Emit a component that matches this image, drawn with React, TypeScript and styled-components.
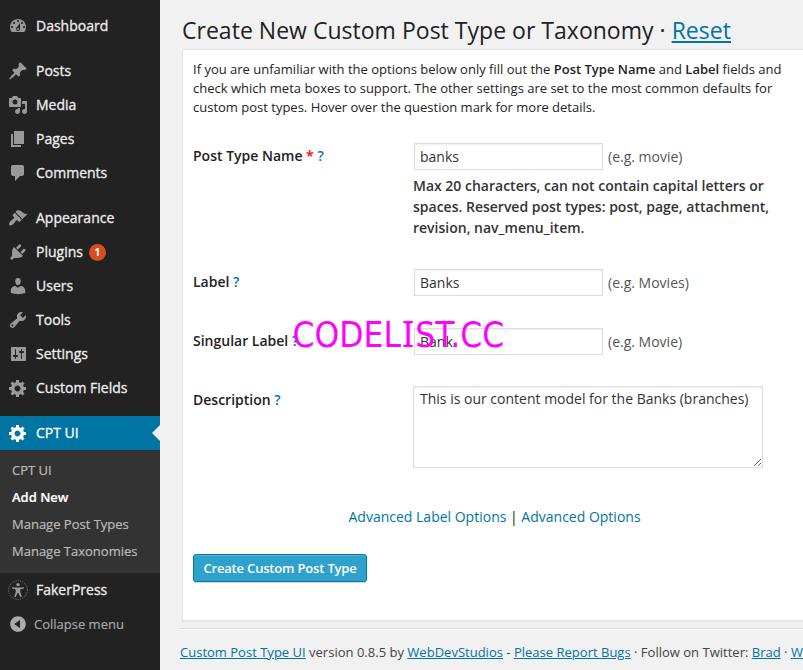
import React from 'react';
import styled, { createGlobalStyle, css } from 'styled-components';

const GlobalStyle = createGlobalStyle`
  * { box-sizing: border-box; }
  html, body { margin: 0; padding: 0; overflow: hidden; }
  body {
    background: #f1f1f1;
    color: #222;
    font-family: 'Open Sans', 'Noto Sans', sans-serif;
    font-size: 14px;
  }
`;

const Page = styled.div`
  position: relative;
  display: flex;
  width: 803px;
  height: 670px;
  overflow: hidden;
`;

const Sidebar = styled.nav`
  flex: none;
  width: 160px;
  height: 670px;
  padding-top: 9px;
  background: #222;
`;

const MenuGroup = styled.div`
  margin-bottom: 11px;
`;

const MenuItem = styled.a<{ $active?: boolean }>`
  display: flex;
  align-items: center;
  height: 34px;
  padding-left: 8px;
  color: ${p => (p.$active ? '#fff' : '#eee')};
  background: ${p => (p.$active ? '#0074a2' : 'transparent')};
  svg { flex: none; width: 20px; height: 20px; margin-right: 8px; fill: ${p => (p.$active ? '#fff' : '#999')}; }
`;

const MenuText = styled.span`
  font-size: 14px;
  font-weight: 500;
  line-height: 18px;
  white-space: nowrap;
  -webkit-text-stroke: 0.3px currentColor;
`;

const Count = styled.span`
  display: flex;
  align-items: center;
  justify-content: center;
  width: 17px;
  height: 17px;
  margin-left: 6px;
  border-radius: 50%;
  background: #d54e21;
  color: #fff;
  font-size: 10px;
  font-weight: 700;
`;

const Pointer = styled.span`
  width: 0;
  height: 0;
  margin-left: auto;
  border: 8px solid transparent;
  border-left: 0;
  border-right-color: #f1f1f1;
`;

const Submenu = styled.div`
  height: 123px;
  padding: 7px 0 0 12px;
  background: #333;
`;

const SubmenuItem = styled.a<{ $current?: boolean }>`
  display: block;
  height: 27px;
  font-size: 13px;
  line-height: 27px;
  white-space: nowrap;
  color: ${p => (p.$current ? '#fff' : '#bbb')};
  font-weight: ${p => (p.$current ? 600 : 400)};
  -webkit-text-stroke: 0.2px currentColor;
`;

const Collapse = styled.a`
  display: flex;
  align-items: center;
  height: 34px;
  padding-left: 8px;
  color: #aaa;
  font-size: 13px;
  -webkit-text-stroke: 0.15px currentColor;
  svg { width: 20px; height: 20px; margin-right: 6px; fill: #aaa; }
`;

const Content = styled.main`
  flex: none;
  width: 643px;
  padding: 15px 0 0 20px;
`;

const Title = styled.h2`
  height: 34px;
  margin: 0 0 0 2px;
  font-size: 23px;
  font-weight: 400;
  line-height: 31px;
  letter-spacing: 0.02px;
  white-space: nowrap;
`;

const link = css`
  color: #0074a2;
`;

const Link = styled.a`
  ${link}
  text-decoration: underline;
`;

const PlainLink = styled.a`
  ${link}
`;

const Panel = styled.section`
  width: 660px;
  height: 572px;
  margin-left: 2px;
  padding: 10px 0 0 10px;
  background: #fff;
  border: 1px solid #e5e5e5;
  box-shadow: 0 1px 1px rgba(0, 0, 0, 0.04);
`;

const Intro = styled.p`
  margin: 0 0 26px;
  font-size: 13px;
  line-height: 19px;
  white-space: nowrap;
  strong { font-weight: 600; }
`;

const Row = styled.div<{ $height: number }>`
  display: grid;
  grid-template-columns: 220px 1fr;
  height: ${p => p.$height}px;
`;

const Label = styled.label<{ $tall?: boolean }>`
  font-size: 14px;
  font-weight: 600;
  line-height: ${p => (p.$tall ? 27 : 25)}px;
  white-space: nowrap;
`;

const Required = styled.span`
  color: #f00;
`;

const Help = styled.a`
  ${link}
  font-weight: 600;
`;

const Field = styled.div`
  display: flex;
  align-items: center;
  height: 27px;
  padding-left: 1px;
  color: #555;
`;

const fieldBox = css`
  border: 1px solid #ddd;
  border-radius: 0;
  outline: none;
  background: #fff;
  box-shadow: inset 0 1px 2px rgba(0, 0, 0, 0.07);
  color: #333;
  font-family: inherit;
  font-size: 14px;
`;

const TextInput = styled.input`
  ${fieldBox}
  width: 189px;
  height: 27px;
  margin-right: 5px;
  padding: 0 5px 1px;
`;

const TextArea = styled.textarea`
  ${fieldBox}
  display: block;
  width: 350px;
  height: 82px;
  padding: 2px 6px;
  line-height: 20px;
  resize: both;
`;

const Note = styled.p`
  margin: 5px 0 0;
  font-size: 14px;
  font-weight: 600;
  line-height: 21px;
  color: #333;
  white-space: nowrap;
`;

const Options = styled.p`
  height: 20px;
  margin: 0 0 27px 155.5px;
  line-height: 20px;
  white-space: nowrap;
`;

const Submit = styled.button`
  display: block;
  width: 174px;
  height: 28px;
  padding: 0;
  background: #2ea2cc;
  border: 1px solid #0074a2;
  border-radius: 3px;
  box-shadow: inset 0 1px 0 rgba(120, 200, 230, 0.5), 0 1px 0 rgba(0, 0, 0, 0.15);
  color: #fff;
  font-family: inherit;
  font-size: 13px;
  font-weight: 600;
  letter-spacing: -0.18px;
  white-space: nowrap;
`;

const Footer = styled.footer`
  height: 42px;
  margin-top: 7px;
  padding-top: 13px;
  border-top: 1px solid #ddd;
  box-shadow: inset 0 1px 0 #fcfcfc;
  color: #444;
  font-size: 13px;
  line-height: 20px;
  letter-spacing: 0.01px;
  white-space: nowrap;
`;

const Watermark = styled.div`
  position: absolute;
  left: 292.6px;
  top: 310px;
  color: #f0f;
  font-family: 'DejaVu Sans Condensed', 'DejaVu Sans', sans-serif;
  font-size: 35px;
  line-height: 50px;
  white-space: nowrap;
`;

const SerifedLetter = styled.span`
  margin: 0 1px;
  font-family: 'Noto Sans', sans-serif;
  font-size: 36px;
  line-height: 0;
`;

const icons = {
  dashboard: 'M3.76 16h12.48c1.1-1.37 1.76-3.11 1.76-5 0-4.42-3.58-8-8-8s-8 3.58-8 8c0 1.89.66 3.63 1.76 5zM10 4c.55 0 1 .45 1 1s-.45 1-1 1-1-.45-1-1 .45-1 1-1zM6 6c.55 0 1 .45 1 1s-.45 1-1 1-1-.45-1-1 .45-1 1-1zm8 0c.55 0 1 .45 1 1s-.45 1-1 1-1-.45-1-1 .45-1 1-1zm-5.37 5.55L12 7v6c0 1.1-.9 2-2 2s-2-.9-2-2c0-.57.24-1.08.63-1.45zM4 10c.55 0 1 .45 1 1s-.45 1-1 1-1-.45-1-1 .45-1 1-1zm12 0c.55 0 1 .45 1 1s-.45 1-1 1-1-.45-1-1 .45-1 1-1zm-5 3c0-.55-.45-1-1-1s-1 .45-1 1 .45 1 1 1 1-.45 1-1z',
  post: 'M10.44 3.02l1.82-1.82 6.36 6.35-1.83 1.82c-1.05-.68-2.48-.57-3.41.36l-.75.75c-.92.93-1.04 2.35-.35 3.41l-1.83 1.82-2.41-2.41-2.8 2.79c-.42.42-3.38 2.71-3.8 2.29s1.86-3.39 2.28-3.81l2.79-2.79L4.1 9.36l1.83-1.82c1.05.69 2.48.57 3.4-.36l.75-.75c.93-.92 1.05-2.35.36-3.41z',
  media: 'M13 11V4c0-.55-.45-1-1-1h-1.67L9 1H5L3.67 3H2c-.55 0-1 .45-1 1v7c0 .55.45 1 1 1h10c.55 0 1-.45 1-1zM7 4.5c1.38 0 2.5 1.12 2.5 2.5S8.38 9.5 7 9.5 4.5 8.38 4.5 7 5.62 4.5 7 4.5zM14 6h5v10.5c0 1.38-1.12 2.5-2.5 2.5S14 17.88 14 16.5s1.12-2.5 2.5-2.5c.17 0 .34.02.5.05V9h-3V6zm-4 8.05V13h2v3.5c0 1.38-1.12 2.5-2.5 2.5S7 17.88 7 16.5 8.12 14 9.5 14c.17 0 .34.02.5.05z',
  page: 'M6 15V2h10v13H6zm-1 1h8v2H3V5h2v11z',
  comments: 'M5 2h9c1.1 0 2 .9 2 2v7c0 1.1-.9 2-2 2h-2l-5 5v-5H5c-1.1 0-2-.9-2-2V4c0-1.1.9-2 2-2z',
  appearance: 'M14.48 11.06L7.41 3.99l1.5-1.5c.5-.56 2.3-.47 3.51.32 1.21.8 1.43 1.28 2.91 2.1 1.18.64 2.45 1.26 4.45.85zm-.71.71L6.7 4.7 4.93 6.47c-.39.39-.39 1.02 0 1.41l1.06 1.06c.39.39.39 1.03 0 1.42-.6.6-1.43 1.11-2.21 1.69-.35.26-.7.53-1.01.84C1.43 14.23.4 16.08 1.4 17.07c.99 1 2.84-.03 4.18-1.36.31-.31.58-.66.85-1.02.57-.78 1.08-1.61 1.69-2.21.39-.39 1.02-.39 1.41 0l1.06 1.06c.39.39 1.02.39 1.41 0z',
  plugins: 'M13.11 4.36L9.87 7.6 8 5.73l3.24-3.24c.35-.34 1.05-.2 1.56.32.52.51.66 1.21.31 1.55zm-8 1.77l.91-1.12 9.01 9.01-1.19.84c-.71.71-2.63 1.16-3.82 1.16H6.14L4.9 17.26c-.59.59-1.54.59-2.12 0-.59-.58-.59-1.53 0-2.12l1.24-1.24v-3.88c0-1.13.4-3.19 1.09-3.89zm7.26 3.97l3.24-3.24c.34-.35 1.04-.21 1.55.31.52.51.66 1.21.31 1.55l-3.24 3.25z',
  users: 'M10 9.25c-2.27 0-2.73-3.44-2.73-3.44C7 4.02 7.82 2 9.97 2c2.16 0 2.98 2.02 2.71 3.81 0 0-.41 3.44-2.68 3.44zm0 2.57L12.72 10c2.39 0 4.52 2.33 4.52 4.53v2.49s-3.65 1.13-7.24 1.13c-3.65 0-7.24-1.13-7.24-1.13v-2.49c0-2.25 1.94-4.48 4.47-4.48z',
  tools: 'M16.68 9.77c-1.34 1.34-3.3 1.67-4.95.99l-5.41 6.52c-.99.99-2.59.99-3.58 0s-.99-2.59 0-3.57l6.52-5.42c-.68-1.65-.35-3.61.99-4.95 1.28-1.28 3.12-1.62 4.72-1.06l-2.89 2.89 2.82 2.82 2.86-2.87c.53 1.58.18 3.39-1.08 4.65zM3.81 16.21c.4.39 1.04.39 1.43 0 .4-.4.4-1.04 0-1.43-.39-.4-1.03-.4-1.43 0-.39.39-.39 1.03 0 1.43z',
  settings: 'M18 16V4c0-.55-.45-1-1-1H4c-.55 0-1 .45-1 1v12c0 .55.45 1 1 1h13c.55 0 1-.45 1-1zM8 11h1.5c.3 0 .5.45.5 1s-.2 1-.5 1H8v1.5c0 .28-.22.5-.5.5s-.5-.22-.5-.5V13H5.5c-.3 0-.5-.45-.5-1s.2-1 .5-1H7V5.5c0-.28.22-.5.5-.5s.5.22.5.5V11zm5-2h-1c-.55 0-1-.45-1-1s.45-1 1-1h1V5.5c0-.28.22-.5.5-.5s.5.22.5.5V7h1c.55 0 1 .45 1 1s-.45 1-1 1h-1v5.5c0 .28-.22.5-.5.5s-.5-.22-.5-.5V9z',
  gear: 'M18 12h-2.18c-.17.7-.44 1.35-.81 1.93l1.54 1.54-2.1 2.1-1.54-1.54c-.58.36-1.23.63-1.91.79V19H8v-2.18c-.68-.16-1.33-.43-1.91-.79l-1.54 1.54-2.12-2.12 1.54-1.54c-.36-.58-.63-1.23-.79-1.91H1V9.03h2.17c.16-.7.44-1.35.8-1.94L2.43 5.55l2.1-2.1 1.54 1.54c.58-.37 1.24-.64 1.93-.81V2h3v2.18c.68.16 1.33.43 1.91.79l1.54-1.54 2.12 2.12-1.54 1.54c.36.59.64 1.24.8 1.94H18V12zm-8.5 1.5c1.66 0 3-1.34 3-3s-1.34-3-3-3-3 1.34-3 3 1.34 3 3 3z',
  collapse: 'M10 2.16c4.33 0 7.84 3.51 7.84 7.84s-3.51 7.84-7.84 7.84S2.16 14.33 2.16 10 5.71 2.16 10 2.16zm2 11.72V6.12L6.18 9.97z',
};

type IconName = keyof typeof icons;

const Icon = ({ name }: { name: IconName }) => (
  <svg viewBox="0 0 20 20" aria-hidden="true">
    <path d={icons[name]} fillRule="evenodd" />
  </svg>
);

const AccessIcon = () => (
  <svg viewBox="0 0 20 20" aria-hidden="true">
    <circle cx="10" cy="10" r="9.4" fill="none" stroke="#888" strokeWidth="0.8" strokeDasharray="1.2 1.1" />
    <circle cx="10" cy="4.6" r="1.7" />
    <path d="M4 7.2c2 .3 4 .3 6 .3s4 0 6-.3v1.3l-3.7.8v2.7l1.5 5h-1.5L10.400 13h-.8l-1.900 4H6.200l1.500-5V9.300L4 8.500z" />
  </svg>
);

const groups: { icon: IconName; label: string; count?: number }[][] = [
  [{ icon: 'dashboard', label: 'Dashboard' }],
  [
    { icon: 'post', label: 'Posts' },
    { icon: 'media', label: 'Media' },
    { icon: 'page', label: 'Pages' },
    { icon: 'comments', label: 'Comments' },
  ],
  [
    { icon: 'appearance', label: 'Appearance' },
    { icon: 'plugins', label: 'Plugins', count: 1 },
    { icon: 'users', label: 'Users' },
    { icon: 'tools', label: 'Tools' },
    { icon: 'settings', label: 'Settings' },
    { icon: 'gear', label: 'Custom Fields' },
  ],
];

const submenu = ['CPT UI', 'Add New', 'Manage Post Types', 'Manage Taxonomies'];

export default function App() {
  return (
    <>
      <GlobalStyle />
      <Page>
        <Sidebar>
          {groups.map((group, i) => (
            <MenuGroup key={i}>
              {group.map(item => (
                <MenuItem key={item.label}>
                  <Icon name={item.icon} />
                  <MenuText>{item.label}</MenuText>
                  {item.count && <Count>{item.count}</Count>}
                </MenuItem>
              ))}
            </MenuGroup>
          ))}
          <MenuItem $active>
            <Icon name="gear" />
            <MenuText>CPT UI</MenuText>
            <Pointer />
          </MenuItem>
          <Submenu>
            {submenu.map(label => (
              <SubmenuItem key={label} $current={label === 'Add New'}>{label}</SubmenuItem>
            ))}
          </Submenu>
          <MenuItem>
            <AccessIcon />
            <MenuText>FakerPress</MenuText>
          </MenuItem>
          <Collapse>
            <Icon name="collapse" />
            Collapse menu
          </Collapse>
        </Sidebar>

        <Content>
          <Title>
            Create New Custom Post Type or Taxonomy · <Link>Reset</Link>
          </Title>
          <Panel>
            <Intro>
              If you are unfamiliar with the options below only fill out the <strong>Post Type Name</strong> and <strong>Label</strong> fields and<br />
              check which meta boxes to support. The other settings are set to the most common defaults for<br />
              custom post types. Hover over the question mark for more details.
            </Intro>
            <Row $height={126}>
              <Label>Post Type Name <Required>*</Required> <Help>?</Help></Label>
              <div>
                <Field><TextInput defaultValue="banks" />(e.g. movie)</Field>
                <Note>
                  Max 20 characters, can not contain capital letters or<br />
                  spaces. Reserved post types: post, page, attachment,<br />
                  revision, nav_menu_item.
                </Note>
              </div>
            </Row>
            <Row $height={59}>
              <Label>Label <Help>?</Help></Label>
              <Field><TextInput defaultValue="Banks" />(e.g. Movies)</Field>
            </Row>
            <Row $height={58}>
              <Label>Singular Label <Help>?</Help></Label>
              <Field><TextInput defaultValue="Bank" />(e.g. Movie)</Field>
            </Row>
            <Row $height={121}>
              <Label $tall>Description <Help>?</Help></Label>
              <TextArea defaultValue="This is our content model for the Banks (branches)" />
            </Row>
            <Options>
              <PlainLink>Advanced Label Options</PlainLink> | <PlainLink>Advanced Options</PlainLink>
            </Options>
            <Submit>Create Custom Post Type</Submit>
          </Panel>
          <Footer>
            <Link>Custom Post Type UI</Link> version 0.8.5 by <Link>WebDevStudios</Link> - <Link>Please Report Bugs</Link> · Follow on Twitter: <Link>Brad</Link> · <Link>WebDevStudios</Link>
          </Footer>
        </Content>
        <Watermark>CODEL<SerifedLetter>I</SerifedLetter>ST.CC</Watermark>
      </Page>
    </>
  );
}
